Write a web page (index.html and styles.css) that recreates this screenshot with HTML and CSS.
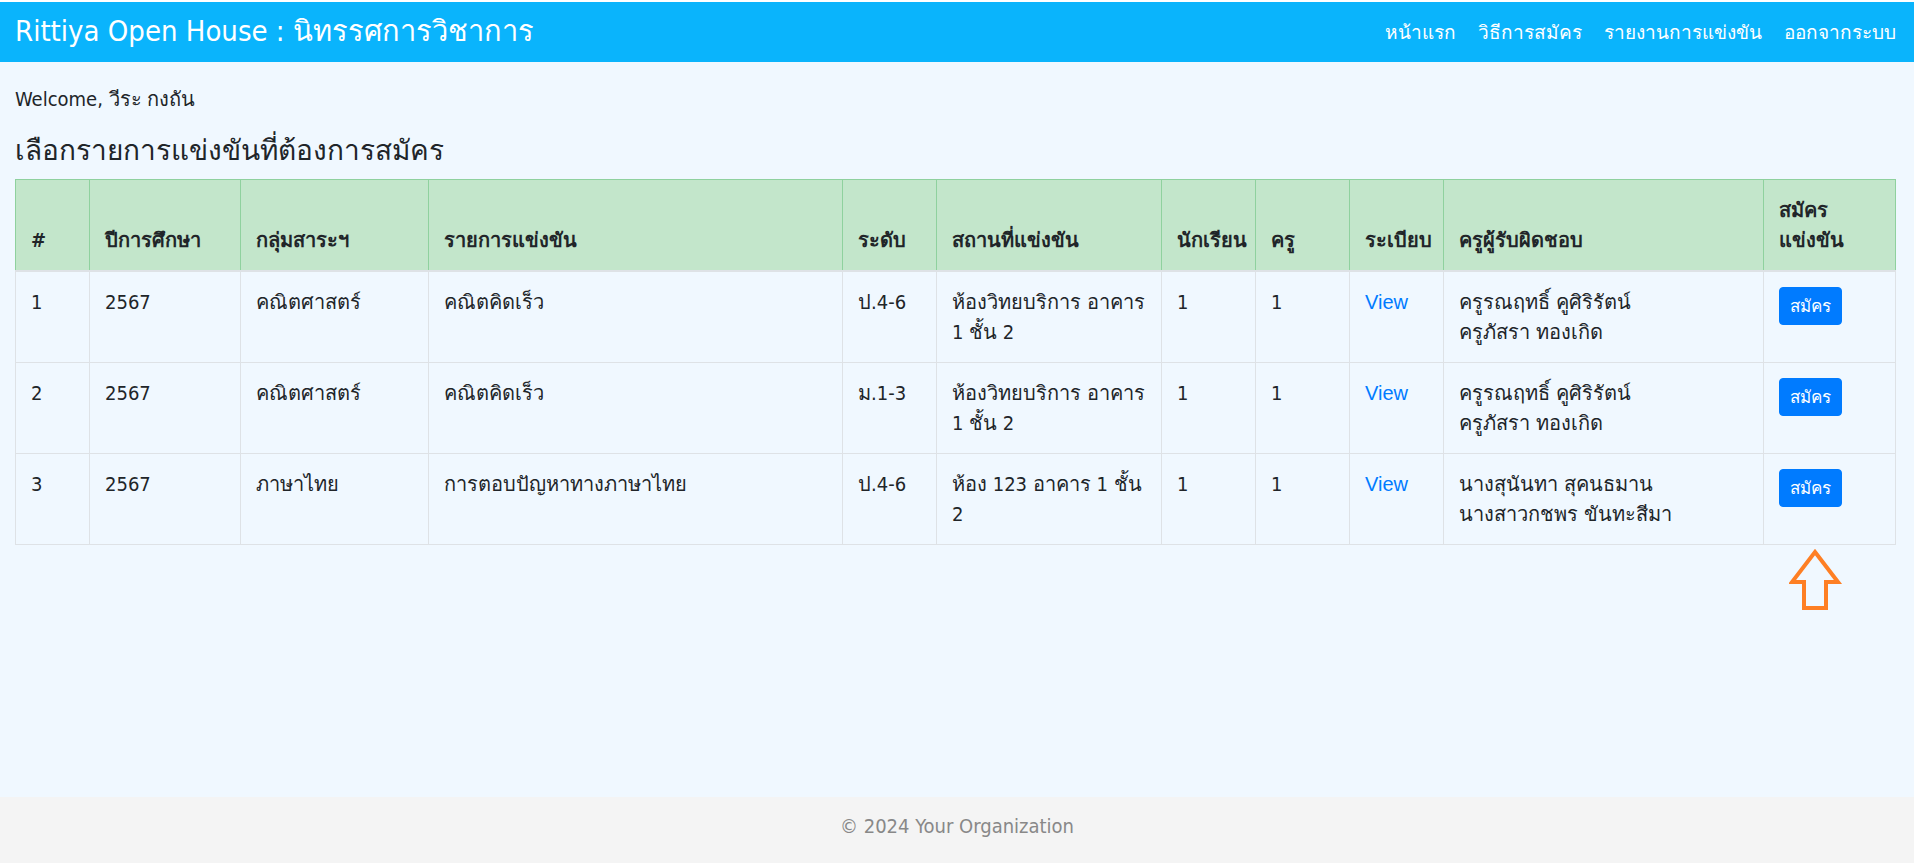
FILE: index.html
```html
<!DOCTYPE html>
<html lang="th">
	<head>
		<meta charset="UTF-8" />
		<meta name="viewport" content="width=device-width, initial-scale=1" />
		<title>Rittiya Open House</title>
		<link rel="stylesheet" href="styles.css">
	</head>
	<body>
		<nav class="topbar">
			<a class="brand" href="#">Rittiya Open House : นิทรรศการวิชาการ</a>
			<ul class="menu">
				<li><a href="#">หน้าแรก</a></li>
				<li><a href="#">วิธีการสมัคร</a></li>
				<li><a href="#">รายงานการแข่งขัน</a></li>
				<li><a href="#">ออกจากระบบ</a></li>
			</ul>
		</nav>

		<main class="content">
			<p class="welcome">Welcome, วีระ กงถัน</p>
			<h4 class="title">เลือกรายการแข่งขันที่ต้องการสมัคร</h4>

			<table class="contests">
				<colgroup>
					<col style="width:74px"><col style="width:151px"><col style="width:188px"><col style="width:414px">
					<col style="width:94px"><col style="width:225px"><col style="width:94px"><col style="width:94px">
					<col style="width:94px"><col style="width:320px"><col style="width:132px">
				</colgroup>
				<thead>
					<tr>
						<th>#</th><th>ปีการศึกษา</th><th>กลุ่มสาระฯ</th><th>รายการแข่งขัน</th><th>ระดับ</th>
						<th>สถานที่แข่งขัน</th><th>นักเรียน</th><th>ครู</th><th>ระเบียบ</th><th>ครูผู้รับผิดชอบ</th><th>สมัคร<br>แข่งขัน</th>
					</tr>
				</thead>
				<tbody>
					<tr>
						<td>1</td><td>2567</td><td>คณิตศาสตร์</td><td>คณิตคิดเร็ว</td><td>ป.4-6</td>
						<td>ห้องวิทยบริการ อาคาร 1 ชั้น 2</td><td>1</td><td>1</td><td><a class="view" href="#">View</a></td>
						<td>ครูรณฤทธิ์ คูศิริรัตน์<br>ครูภัสรา ทองเกิด</td>
						<td><a class="btn-apply" href="#">สมัคร</a></td>
					</tr>
					<tr>
						<td>2</td><td>2567</td><td>คณิตศาสตร์</td><td>คณิตคิดเร็ว</td><td>ม.1-3</td>
						<td>ห้องวิทยบริการ อาคาร 1 ชั้น 2</td><td>1</td><td>1</td><td><a class="view" href="#">View</a></td>
						<td>ครูรณฤทธิ์ คูศิริรัตน์<br>ครูภัสรา ทองเกิด</td>
						<td><a class="btn-apply" href="#">สมัคร</a></td>
					</tr>
					<tr>
						<td>3</td><td>2567</td><td>ภาษาไทย</td><td>การตอบปัญหาทางภาษาไทย</td><td>ป.4-6</td>
						<td>ห้อง 123 อาคาร 1 ชั้น 2</td><td>1</td><td>1</td><td><a class="view" href="#">View</a></td>
						<td>นางสุนันทา สุคนธมาน<br>นางสาวกชพร ขันทะสีมา</td>
						<td><a class="btn-apply" href="#">สมัคร</a></td>
					</tr>
				</tbody>
			</table>

			<div class="hint">
				<svg width="56" height="66" viewBox="0 0 56 66">
					<path d="M26 4 L49 34 L37 34 L37 60 L15 60 L15 34 L3 34 Z" fill="none" stroke="#fe7f24" stroke-width="4" stroke-linejoin="miter"/>
				</svg>
			</div>
		</main>

		<footer class="footer">&copy; 2024 Your Organization</footer>
	</body>
</html>
```

FILE: styles.css
```css
html, body { margin: 0; padding: 0; }
body { background: #f0f8ff; color: #212529; font-family: "Liberation Sans Narrow", "DejaVu Sans Condensed", "Noto Sans", sans-serif; font-size: 20px; line-height: 1.5; display: flex; flex-direction: column; min-height: 100vh; }
a { text-decoration: none; }

.topbar { display: flex; align-items: center; justify-content: space-between; height: 60px; border-top: 2px solid #fff; background: #0ab4fc; padding: 0 18px 0 15px; }
.brand { color: #fff; font-size: 29px; }
.menu { display: flex; list-style: none; margin: 0; padding: 0; gap: 22px; }
.menu a { color: #fff; font-size: 19px; }

.content { flex: 1; padding: 0 19px 0 15px; }
.welcome { margin: 22px 0 0; }
.title { margin: 20px 0 11px; font-size: 28px; font-weight: normal; line-height: 1.2; }

table.contests { width: 1880px; table-layout: fixed; border-collapse: collapse; }
table.contests th, table.contests td { border: 1px solid #dee2e6; padding: 15px; text-align: left; vertical-align: top; }
table.contests th { background: #c3e6cb; border-color: #8fd19e; border-bottom: 2px solid #dee2e6; vertical-align: bottom; font-weight: bold; }

.view { color: #007bff; font-family: "Liberation Sans", Arial, sans-serif; }
.btn-apply { display: inline-block; background: #007bff; color: #fff; font-size: 17px; line-height: 26px; padding: 5px 10px; border: 1px solid #007bff; border-radius: 4px; }

.hint { display: flex; justify-content: flex-end; padding: 3px 50px 0 0; }
.hint svg { display: block; }

.footer { background: #f4f4f4; color: #888; text-align: center; padding: 14px 0 22px; line-height: 30px; }
```
